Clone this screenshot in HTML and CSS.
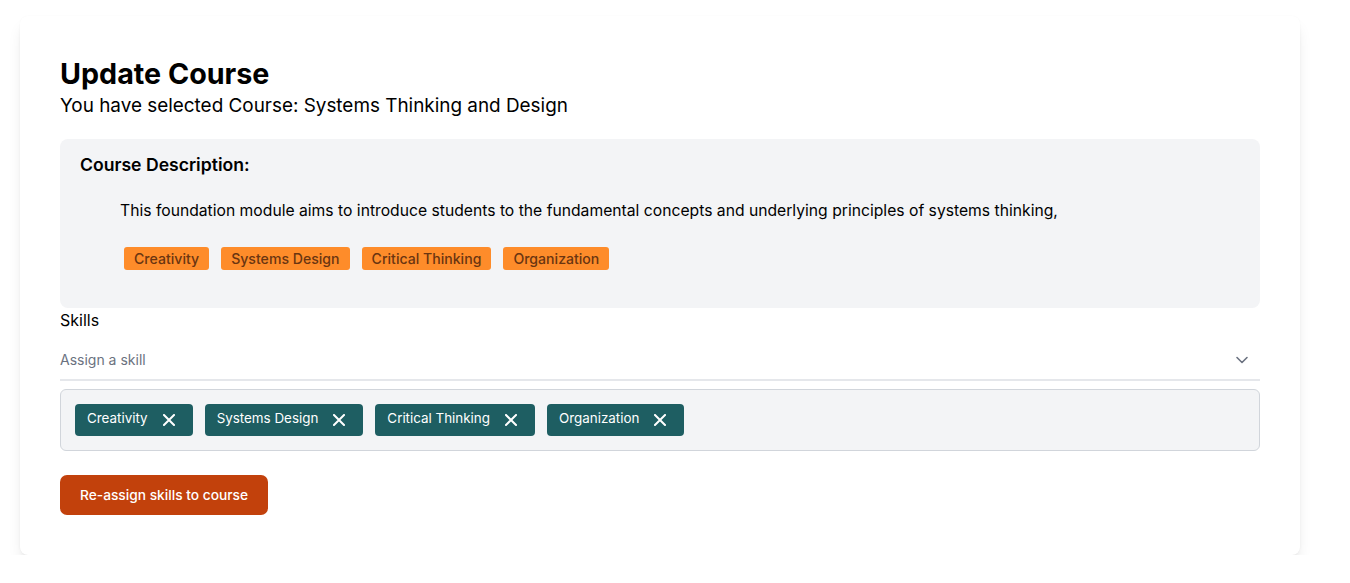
FILE: index.html
```html
<!DOCTYPE html>
<html lang="en">
<head>
<meta charset="utf-8">
<title>Update Course</title>
<link rel="stylesheet" href="styles.css">
</head>
<body>
<main class="card">
  <h1 class="title">Update Course</h1>
  <p class="subtitle">You have selected Course: Systems Thinking and Design</p>

  <section class="desc-box">
    <h2 class="desc-heading">Course Description:</h2>
    <p class="desc-text">This foundation module aims to introduce students to the fundamental concepts and underlying principles of systems thinking,</p>
    <div class="tags">
      <span class="tag">Creativity</span>
      <span class="tag">Systems Design</span>
      <span class="tag">Critical Thinking</span>
      <span class="tag">Organization</span>
    </div>
  </section>

  <label class="skills-label">Skills</label>
  <div class="select">
    <span class="placeholder">Assign a skill</span>
    <svg class="chevron" width="14" height="10" viewBox="0 0 14 10" fill="none" stroke="#6b7280" stroke-width="1.6" stroke-linecap="round" stroke-linejoin="round"><path d="M2 2.5 L7 7.5 L12 2.5"/></svg>
  </div>

  <div class="chips">
    <span class="chip"><span class="chip-text">Creativity</span><svg class="chip-x" width="12" height="12" viewBox="0 0 12 12" stroke="#fff" stroke-width="2" stroke-linecap="square"><path d="M1 1 L11 11 M11 1 L1 11"/></svg></span>
    <span class="chip"><span class="chip-text">Systems Design</span><svg class="chip-x" width="12" height="12" viewBox="0 0 12 12" stroke="#fff" stroke-width="2" stroke-linecap="square"><path d="M1 1 L11 11 M11 1 L1 11"/></svg></span>
    <span class="chip"><span class="chip-text">Critical Thinking</span><svg class="chip-x" width="12" height="12" viewBox="0 0 12 12" stroke="#fff" stroke-width="2" stroke-linecap="square"><path d="M1 1 L11 11 M11 1 L1 11"/></svg></span>
    <span class="chip"><span class="chip-text">Organization</span><svg class="chip-x" width="12" height="12" viewBox="0 0 12 12" stroke="#fff" stroke-width="2" stroke-linecap="square"><path d="M1 1 L11 11 M11 1 L1 11"/></svg></span>
  </div>

  <button class="submit" type="button">Re-assign skills to course</button>
</main>
</body>
</html>
```
FILE: styles.css
```css
* { box-sizing: border-box; }

body {
  margin: 0;
  background: #ffffff;
  font-family: Inter, "Noto Sans", "Liberation Sans", sans-serif;
  color: #000000;
}

.card {
  display: flex;
  flex-direction: column;
  align-items: flex-start;
  width: 1280px;
  margin: 16px 0 0 20px;
  padding: 40px;
  background: #ffffff;
  border-radius: 8px;
  box-shadow: 0 10px 15px -3px rgba(0, 0, 0, 0.1), 0 4px 6px -4px rgba(0, 0, 0, 0.1), 0 0 2px rgba(0, 0, 0, 0.03);
}

.title {
  margin: 0;
  font-size: 28.7px;
  line-height: 36px;
  font-weight: 700;
}

.subtitle {
  margin: 0;
  font-size: 18.9px;
  line-height: 28px;
  font-weight: 400;
}

.desc-box {
  align-self: stretch;
  margin-top: 19px;
  padding: 12px 20px 38px;
  background: #f3f4f6;
  border-radius: 8px;
}

.desc-heading {
  margin: 0;
  font-size: 17.6px;
  line-height: 28px;
  font-weight: 600;
}

.desc-text {
  margin: 18px 0 0 40px;
  font-size: 15.7px;
  line-height: 28px;
}

.tags {
  display: flex;
  gap: 12px;
  margin: 22px 0 0 44px;
}

.tag {
  display: inline-flex;
  align-items: center;
  height: 23px;
  padding: 0 10px;
  background: #fe8c2a;
  color: #6a3511;
  border-radius: 3px;
  font-size: 14.1px;
  font-weight: 500;
}

.skills-label {
  font-size: 16px;
  line-height: 24px;
}

.select {
  align-self: stretch;
  display: flex;
  align-items: center;
  justify-content: space-between;
  height: 49px;
  padding: 8px 11px 0 0;
  border-bottom: 2px solid #e5e7eb;
}

.placeholder {
  font-size: 14px;
  color: #6b7280;
}

.chevron { display: block; }

.chips {
  align-self: stretch;
  display: flex;
  gap: 12px;
  margin-top: 8px;
  padding: 14px;
  background: #f3f4f6;
  border: 1px solid #d1d5db;
  border-radius: 6px;
}

.chip {
  display: inline-flex;
  align-items: center;
  height: 32px;
  padding: 0 18px 0 12px;
  gap: 15px;
  background: #1e5e62;
  color: #ffffff;
  border-radius: 4px;
  font-size: 13.4px;
}

.chip-text { padding-bottom: 4px; }

.chip-x { display: block; }

.submit {
  margin-top: 24px;
  height: 40px;
  padding: 0 20px;
  border: none;
  border-radius: 7px;
  background: #c2410c;
  color: #ffffff;
  font-family: inherit;
  font-size: 13.75px;
  font-weight: 500;
}
```
